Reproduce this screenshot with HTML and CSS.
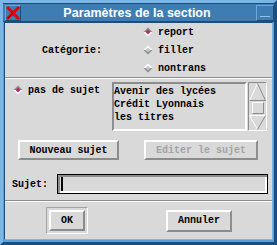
FILE: index.html
```html
<!DOCTYPE html>
<html lang="fr">
<head>
    <meta charset="UTF-8">
    <title>Paramètres de la section</title>
    <link rel="stylesheet" href="styles.css">
</head>
<body>
    <div class="window">
        <div class="titlebar">
            <span class="tb-btn close">
                <svg width="14" height="14" viewBox="0 0 14 14">
                    <path d="M1 1 L13 13 M13 1 L1 13" stroke="#e00000" stroke-width="3"/>
                    <path d="M2 12 L7 7" stroke="#200000" stroke-width="1"/>
                </svg>
            </span>
            <span class="title">Paramètres de la section</span>
            <span class="tb-btn min"><span class="min-bar"></span></span>
        </div>
        <div class="client">
            <div class="category">
                <div class="cat-label">Catégorie:</div>
                <div class="cat-options">
                    <div class="radio on"><svg class="dia" width="10" height="10" viewBox="0 0 10 10"><polygon points="0.5,5 5,0.5 9.5,5" fill="#8c8c8c"/><polygon points="0.5,5 5,9.5 9.5,5" fill="#ffffff"/><polygon points="2.5,5 5,2.5 7.5,5 5,7.5" fill="#b03060"/></svg>report</div>
                    <div class="radio"><svg class="dia" width="10" height="10" viewBox="0 0 10 10"><polygon points="0.5,5 5,0.5 9.5,5" fill="#ffffff"/><polygon points="0.5,5 5,9.5 9.5,5" fill="#8c8c8c"/><polygon points="2.5,5 5,2.5 7.5,5 5,7.5" fill="#c8c8c8"/></svg>filler</div>
                    <div class="radio"><svg class="dia" width="10" height="10" viewBox="0 0 10 10"><polygon points="0.5,5 5,0.5 9.5,5" fill="#ffffff"/><polygon points="0.5,5 5,9.5 9.5,5" fill="#8c8c8c"/><polygon points="2.5,5 5,2.5 7.5,5 5,7.5" fill="#c8c8c8"/></svg>nontrans</div>
                </div>
            </div>
            <div class="sep"></div>
            <div class="subject">
                <div class="subject-top">
                    <div class="subject-radio">
                        <div class="radio on"><svg class="dia" width="10" height="10" viewBox="0 0 10 10"><polygon points="0.5,5 5,0.5 9.5,5" fill="#8c8c8c"/><polygon points="0.5,5 5,9.5 9.5,5" fill="#ffffff"/><polygon points="2.5,5 5,2.5 7.5,5 5,7.5" fill="#b03060"/></svg>pas de sujet</div>
                    </div>
                    <div class="listbox">
                        <div>Avenir des lycées</div>
                        <div>Crédit Lyonnais</div>
                        <div>les titres</div>
                    </div>
                    <svg class="scrollbar" width="19" height="49" viewBox="0 0 19 49">
                        <path d="M0.5 48.5 V0.5 H18.5" stroke="#8c8c8c" fill="none"/>
                        <path d="M0.5 48.5 H18.5 V0.5" stroke="#ffffff" fill="none"/>
                        <path d="M1.5 18.5 L9.5 1.5" stroke="#ffffff" fill="none"/>
                        <path d="M9.5 1.5 L17.5 18.5 H1.5" stroke="#8c8c8c" fill="none"/>
                        <path d="M4.5 31.5 V20.5 H15.5" stroke="#ffffff" fill="none"/>
                        <path d="M4.5 31.5 H15.5 V20.5" stroke="#8c8c8c" fill="none"/>
                        <path d="M9.5 47.5 L1.5 33.5 H17.5" stroke="#ffffff" fill="none"/>
                        <path d="M17.5 33.5 L9.5 47.5" stroke="#8c8c8c" fill="none"/>
                    </svg>
                </div>
                <div class="subject-actions">
                    <div class="btn new">Nouveau sujet</div>
                    <div class="btn edit disabled">Editer le sujet</div>
                </div>
                <div class="subject-entry">
                    <div class="entry-label">Sujet:</div>
                    <div class="entry"><span class="cursor"></span></div>
                </div>
            </div>
            <div class="sep"></div>
            <div class="footer">
                <div class="default-ring"><div class="btn ok">OK</div></div>
                <div class="btn cancel">Annuler</div>
            </div>
        </div>
    </div>
</body>
</html>
```

FILE: styles.css
```css
body { margin: 0; background: #4a8cc6; font-family: "Liberation Mono", monospace; font-weight: bold; font-size: 10px; color: #000; }
.window { width: 277px; height: 245px; box-sizing: border-box; border: 3px solid; border-color: #7ab6e8 #1c4f7d #1c4f7d #7ab6e8; background: #5a9edb; display: flex; flex-direction: column; }
.titlebar { height: 19px; box-sizing: border-box; border-top: 1px solid #1d4d78; border-bottom: 1px solid #1d4d78; background: #3d7db4; display: flex; align-items: center; position: relative; }
.title { flex: 1; text-align: center; color: #fff; font-family: "Liberation Sans", Arial, sans-serif; font-size: 12.5px; font-weight: bold; margin-left: -3px; }
.tb-btn { width: 16px; height: 16px; box-sizing: border-box; border: 1px solid; display: flex; align-items: center; justify-content: center; }
.close { margin-left: 2px; border-color: #6aa8de #1d4d78 #1d4d78 #6aa8de; }
.min { margin-right: 0; width: 18px; border-color: #6aa8de #1d4d78 #1d4d78 #6aa8de; align-items: flex-end; padding-bottom: 3px; }
.min-bar { width: 10px; height: 1px; background: #8cc4f0; }
.client { flex: 1; margin: 0 1px 2px 1px; border: 1px solid; border-color: #1d4d78 #7ab6e8 #7ab6e8 #1d4d78; background: #d9d9d9; display: flex; flex-direction: column; }
.sep { height: 1px; border-top: 1px solid #8c8c8c; background: #fff; }
.category { height: 54px; display: grid; grid-template-columns: 138px 1fr; align-items: center; }
.cat-label { padding-left: 37px; }
.cat-options { display: flex; flex-direction: column; }
.radio { height: 18px; display: flex; align-items: center; white-space: nowrap; }
.dia { margin-right: 5px; flex: none; }
.subject { height: 121px; display: flex; flex-direction: column; }
.subject-top { display: flex; padding-top: 3px; }
.subject-radio { width: 107px; padding-left: 8px; box-sizing: border-box; }
.subject-radio .radio { height: 16px; }
.listbox { width: 135px; height: 49px; box-sizing: border-box; border: 2px solid; border-color: #8c8c8c #fff #fff #8c8c8c; padding-top: 1px; line-height: 13px; white-space: nowrap; }
.scrollbar { margin-left: 1px; }
.subject-actions { display: flex; gap: 25px; padding-left: 13px; margin-top: 9px; }
.btn { height: 20px; box-sizing: border-box; border: 2px solid; border-color: #fff #8c8c8c #8c8c8c #fff; display: flex; align-items: center; justify-content: center; white-space: nowrap; }
.new { width: 101px; }
.edit { width: 114px; }
.disabled { color: #a3a3a3; }
.subject-entry { display: flex; align-items: center; margin-top: 14px; }
.entry-label { width: 52px; padding-left: 7px; box-sizing: border-box; }
.entry { width: 211px; height: 20px; box-sizing: border-box; border: 1px solid #000; box-shadow: inset 2px 2px 0 #8c8c8c, inset -2px -2px 0 #fff; display: flex; align-items: center; padding-left: 3px; }
.cursor { width: 2px; height: 14px; background: #000; }
.footer { flex: 1; display: flex; align-items: center; padding-left: 41px; }
.default-ring { width: 42px; height: 27px; box-sizing: border-box; border: 1px solid; border-color: #a3a3a3 #fff #fff #a3a3a3; padding: 2px; }
.ok { width: 36px; height: 21px; }
.cancel { width: 66px; height: 22px; margin-left: 78px; }
```
